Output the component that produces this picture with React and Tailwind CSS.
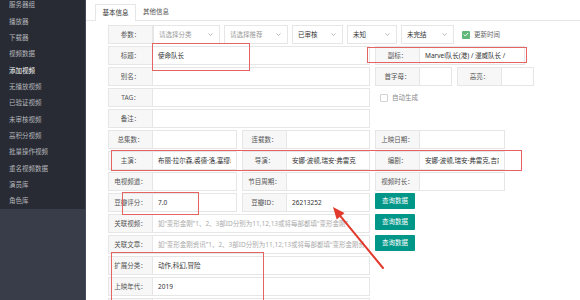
const menu = ['服务器组', '播放器', '下载器', '视频数据', '添加视频', '无播放视频', '已验证视频', '未审核视频', '高积分视频', '批量操作视频', '重名视频数据', '演员库', '角色库'];

function Label({ children }) {
  return (
    <div className="flex items-center justify-center shrink-0 w-[45px] h-full bg-[#f7f7f7] border border-[#e6e6e6] text-[#555] whitespace-nowrap">
      {children}
    </div>
  );
}

function Field({ label, w, value, placeholder }) {
  return (
    <div className="flex h-full shrink-0">
      <Label>{label}</Label>
      <div className={`flex items-center h-full border border-l-0 border-[#e6e6e6] px-[5px] overflow-hidden ${w} ${placeholder ? 'text-[#aaa]' : 'text-[#333]'}`}>
        <span className="block w-full overflow-hidden whitespace-nowrap">{value || placeholder}</span>
      </div>
    </div>
  );
}

function Select({ w, text, muted }) {
  return (
    <div className={`flex items-center justify-between h-full shrink-0 border border-[#e6e6e6] bg-white pl-[5px] pr-[6px] ${w} ${muted ? 'text-[#999]' : 'text-[#333]'}`}>
      <span>{text}</span>
      <svg width="5" height="3" viewBox="0 0 5 3"><path d="M0.5 0.5 L2.5 2.5 L4.5 0.5" fill="none" stroke="#aaa" strokeWidth="0.8" /></svg>
    </div>
  );
}

function Btn() {
  return (
    <div className="flex items-center justify-center w-[40px] h-[16px] bg-[#009688] text-white rounded-[1px] shrink-0">查询数据</div>
  );
}

export default function App() {
  return (
    <div className="flex w-[580px] h-[300px] overflow-hidden bg-white text-[6.5px]" style={{ fontFamily: '"Noto Sans", "Noto Sans CJK SC", sans-serif' }}>
      {/* 侧边菜单 */}
      <aside className="w-[86px] shrink-0 h-full bg-[#393d49] border-r border-[#454a58]">
        <ul className="bg-[#282b33] -mt-[3px]">
          {menu.map((m) => (
            <li key={m} className={`flex items-center h-[16.33px] pl-[9px] ${m === '添加视频' ? 'text-white' : 'text-[#b4b6bb]'}`}>{m}</li>
          ))}
        </ul>
      </aside>

      <main className="relative flex-1 h-full">
        {/* tab */}
        <div className="flex items-end h-[21px] border-b border-[#e6e6e6] pl-[9px]">
          <div className="flex items-center justify-center w-[41px] h-[17px] -mb-px border border-b-0 border-[#e6e6e6] bg-white text-[#333]">基本信息</div>
          <div className="flex items-center justify-center w-[40px] h-[16px] text-[#555]">其他信息</div>
        </div>

        <div className="flex flex-col gap-[2px] pl-[22px] pt-[4px]">
          <div className="flex h-[19px] items-center">
            <Label>参数：</Label>
            <div className="flex h-full gap-[4px]">
              <Select w="w-[67px]" text="请选择分类" muted />
              <Select w="w-[64px]" text="请选择推荐" muted />
              <Select w="w-[51px]" text="已审核" />
              <Select w="w-[50px]" text="未知" />
              <Select w="w-[53px]" text="未完结" />
            </div>
            <div className="flex items-center ml-[8px] gap-[4px] text-[#666]">
              <span className="flex items-center justify-center w-[8px] h-[8px] bg-[#5fb878] rounded-[1px]">
                <svg width="6" height="5" viewBox="0 0 6 5"><path d="M0.8 2.5 L2.3 4 L5.2 1" fill="none" stroke="white" strokeWidth="1" /></svg>
              </span>
              更新时间
            </div>
          </div>

          <div className="flex h-[19px] gap-[5px]">
            <Field label="标题：" w="w-[217px]" value="使命队长" />
            <Field label="副标：" w="w-[105px]" value="Marvel队长(港) / 漫威队长 /" />
          </div>

          <div className="flex h-[19px] gap-[5px]">
            <Field label="别名：" w="w-[217px]" />
            <Field label="首字母：" w="w-[32px]" />
            <Field label="高亮：" w="w-[32px]" />
          </div>

          <div className="flex h-[19px] items-center">
            <Field label="TAG：" w="w-[217px]" />
            <div className="flex items-center ml-[10px] gap-[4px] text-[#888]">
              <span className="w-[8px] h-[8px] border border-[#d2d2d2] bg-white rounded-[1px]" />
              自动生成
            </div>
          </div>

          <div className="flex h-[19px]">
            <Field label="备注：" w="w-[217px]" />
          </div>

          <div className="flex h-[19px] gap-[5px]">
            <Field label="总集数：" w="w-[84px]" />
            <Field label="连载数：" w="w-[83px]" />
            <Field label="上映日期：" w="w-[85px]" />
          </div>

          <div className="flex h-[19px] gap-[5px]">
            <Field label="主演：" w="w-[84px]" value="布丽·拉尔森,裘德·洛,塞缪尔·杰克逊,本·门德尔森" />
            <Field label="导演：" w="w-[83px]" value="安娜·波顿,瑞安·弗雷克" />
            <Field label="编剧：" w="w-[85px]" value="安娜·波顿,瑞安·弗雷克,吉内瓦·罗伯森-德沃雷特" />
          </div>

          <div className="flex h-[19px] gap-[5px]">
            <Field label="电视频道：" w="w-[84px]" />
            <Field label="节目周期：" w="w-[83px]" />
            <Field label="视频时长：" w="w-[85px]" />
          </div>

          <div className="flex h-[19px] gap-[5px]">
            <Field label="豆瓣评分：" w="w-[84px]" value="7.0" />
            <Field label="豆瓣ID：" w="w-[83px]" value="26213252" />
            <Btn />
          </div>

          <div className="flex h-[19px] gap-[5px]">
            <Field label="关联视频：" w="w-[217px]" placeholder="如“变形金刚”1、2、3部ID分别为11,12,13或将每部都填“变形金刚”" />
            <Btn />
          </div>

          <div className="flex h-[19px] gap-[5px]">
            <Field label="关联文章：" w="w-[217px]" placeholder="如“变形金刚资讯”1、2、3部ID分别为11,12,13或将每部都填“变形金刚资讯”" />
            <Btn />
          </div>

          <div className="flex h-[19px]">
            <Field label="扩展分类：" w="w-[217px]" value="动作,科幻,冒险" />
          </div>

          <div className="flex h-[19px]">
            <Field label="上映年代：" w="w-[217px]" value="2019" />
          </div>

          <div className="flex h-[19px]">
            <Field label="" w="w-[217px]" />
          </div>
        </div>

        {/* 红色标注 */}
        <div className="absolute left-[66px] top-[43px] w-[98px] h-[28px] border border-[#e46464]" />
        <div className="absolute left-[281px] top-[47px] w-[160px] h-[16px] border border-[#e46464]" />
        <div className="absolute left-[25px] top-[150px] w-[411px] h-[21px] border border-[#e46464]" />
        <div className="absolute left-[36px] top-[192px] w-[77px] h-[23px] border border-[#e46464]" />
        <div className="absolute left-[25px] top-[252px] w-[153px] h-[60px] border border-[#e46464]" />
        <svg className="absolute left-0 top-0" width="494" height="300">
          <path d="M297 268 L254.6 216.3" stroke="#e23b2e" strokeWidth="2" strokeLinecap="round" />
          <polygon points="247,207 258.5,213.1 250.7,219.5" fill="#e23b2e" />
        </svg>
      </main>
    </div>
  );
}
